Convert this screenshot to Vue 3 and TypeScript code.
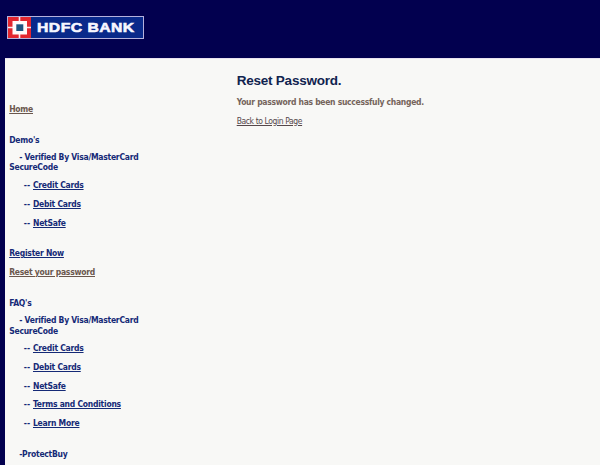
<script setup lang="ts">
interface Entry {
  text: string
  kind: 'top' | 'sub' | 'leaf'
  prefix?: string
  link?: boolean
  visited?: boolean
}

const groups: Entry[][] = [
  [{ text: 'Home', kind: 'top', link: true, visited: true }],
  [
    { text: "Demo's", kind: 'top' },
    { text: '- Verified By Visa/MasterCard SecureCode', kind: 'sub' },
    { text: 'Credit Cards', kind: 'leaf', prefix: '-- ', link: true },
    { text: 'Debit Cards', kind: 'leaf', prefix: '-- ', link: true },
    { text: 'NetSafe', kind: 'leaf', prefix: '-- ', link: true },
  ],
  [
    { text: 'Register Now', kind: 'top', link: true },
    { text: 'Reset your password', kind: 'top', link: true, visited: true },
  ],
  [
    { text: "FAQ's", kind: 'top' },
    { text: '- Verified By Visa/MasterCard SecureCode', kind: 'sub' },
    { text: 'Credit Cards', kind: 'leaf', prefix: '-- ', link: true },
    { text: 'Debit Cards', kind: 'leaf', prefix: '-- ', link: true },
    { text: 'NetSafe', kind: 'leaf', prefix: '-- ', link: true },
    { text: 'Terms and Conditions', kind: 'leaf', prefix: '-- ', link: true },
    { text: 'Learn More', kind: 'leaf', prefix: '-- ', link: true },
  ],
  [{ text: '-ProtectBuy', kind: 'sub' }],
]
</script>

<template>
  <div class="page">
    <header class="banner">
      <div class="logo">
        <svg class="mark" width="23" height="21" viewBox="0 0 23 21">
          <rect width="23" height="21" fill="#e3262f" />
          <path d="M11.5 0V21M0 10.5H23" stroke="#fbe9ee" stroke-width="1.6" />
          <rect x="4.5" y="4" width="14.5" height="13.5" fill="#fffafa" />
          <rect x="8.3" y="7.3" width="7" height="6.7" fill="#1d5480" />
        </svg>
        <span class="name">HDFC BANK</span>
      </div>
    </header>
    <div class="body">
      <nav class="menu">
        <div v-for="(group, g) in groups" :key="g" class="group">
          <p v-for="(item, i) in group" :key="i" :class="['row', item.kind]">
            <template v-if="item.link"><span v-if="item.prefix" class="dash">{{ item.prefix }}</span><a :class="{ visited: item.visited }">{{ item.text }}</a></template>
            <template v-else>{{ item.text }}</template>
          </p>
        </div>
      </nav>
      <main class="content">
        <h1>Reset Password.</h1>
        <p class="message">Your password has been successfuly changed.</p>
        <a class="back">Back to Login Page</a>
      </main>
    </div>
  </div>
</template>

<style>
body {
  margin: 0;
  overflow: hidden;
}
</style>

<style scoped>
.page {
  height: 465px;
  overflow: hidden;
  background: #02004f;
  display: flex;
  flex-direction: column;
  box-sizing: border-box;
  padding-left: 5px;
}
.banner {
  height: 58px;
  flex: none;
  box-sizing: border-box;
  padding: 16px 0 0 2px;
}
.logo {
  display: flex;
  align-items: center;
  box-sizing: border-box;
  width: 137px;
  height: 23px;
  border: 1px solid #b5b2dc;
  background: #09298a;
}
.mark {
  flex: none;
}
.name {
  margin-left: 6px;
  font: bold 13.5px/21px "Liberation Sans", Arial, sans-serif;
  letter-spacing: 0.4px;
  color: #f8f7ff;
  -webkit-text-stroke: 0.6px #f8f7ff;
  white-space: nowrap;
  transform: scaleX(1.165);
  transform-origin: left;
}
.body {
  flex: 1;
  min-height: 0;
  display: flex;
  background: #f8f8f6;
  box-shadow: inset 0 1px 0 #e9e1f1;
}
.menu {
  flex: none;
  width: 140px;
  padding: 45.8px 0 0 4.2px;
  font: bold 8.5px/10.8px "DejaVu Sans Condensed", Tahoma, sans-serif;
  letter-spacing: -0.25px;
  color: #152a76;
}
.group {
  display: flex;
  flex-direction: column;
  gap: 7.9px;
  margin-bottom: 20.1px;
}
.group:nth-child(2) {
  margin-bottom: 19.7px;
}
.group:nth-child(4) {
  margin-bottom: 21.5px;
}
.row {
  margin: 0;
}
.sub {
  text-indent: 10px;
  margin-top: -1.7px;
}
.group .sub + .leaf {
  margin-top: -0.9px;
}
.leaf {
  padding-left: 14.5px;
}
.dash {
  display: inline-block;
  width: 9.3px;
  letter-spacing: 0.2px;
  white-space: nowrap;
}
a {
  text-decoration: underline;
  text-decoration-thickness: 1px;
  text-underline-offset: 1px;
}
.visited {
  color: #6a574d;
}
.content {
  padding: 14px 0 0 87.5px;
}
h1 {
  margin: 0;
  font: bold 13.5px/18px "Liberation Sans", Arial, sans-serif;
  letter-spacing: -0.23px;
  color: #10234f;
}
.message {
  margin: 6px 0 0;
  font: bold 8.5px/12px "DejaVu Sans Condensed", Tahoma, sans-serif;
  letter-spacing: -0.29px;
  color: #75645c;
}
.back {
  display: block;
  margin-top: 7px;
  font: 8.5px/12px "DejaVu Sans Condensed", Tahoma, sans-serif;
  letter-spacing: -0.4px;
  color: #55474a;
}
</style>
